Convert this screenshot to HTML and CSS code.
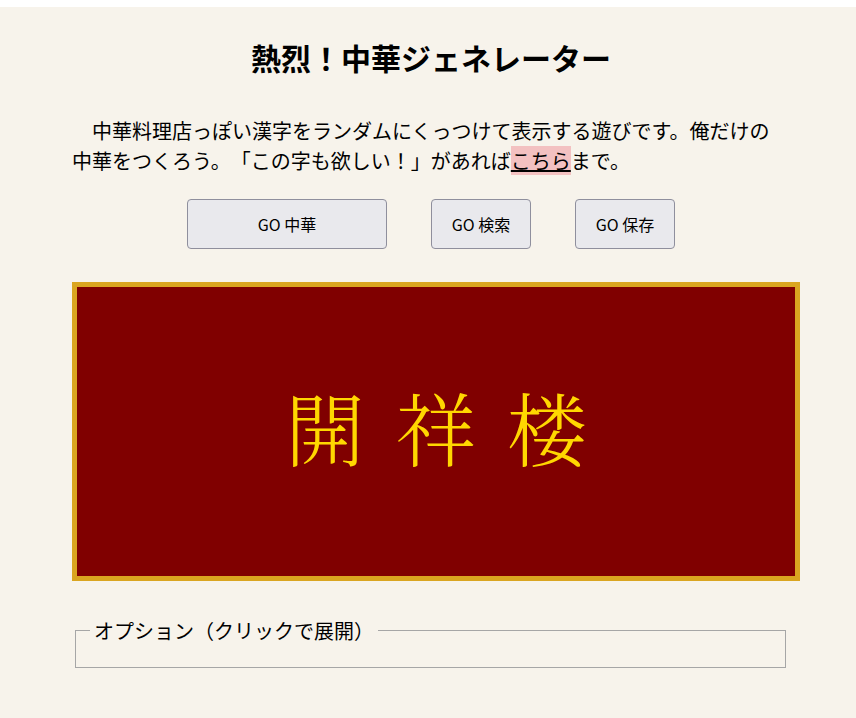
FILE: index.html
```html
<!DOCTYPE html>
<html lang="ja">
<head>
<meta charset="utf-8">
<title>熱烈！中華ジェネレーター</title>
<link rel="stylesheet" href="styles.css">
</head>
<body>
<div class="wrap">
  <h1 class="title">熱烈！中華ジェネレーター</h1>
  <p class="intro">中華料理店っぽい漢字をランダムにくっつけて表示する遊びです。俺だけの中華をつくろう。「この字も欲しい！」があれば<a class="link" href="#">こちら</a>まで。</p>
  <div class="buttons">
    <button class="btn btn-wide">GO 中華</button>
    <button class="btn">GO 検索</button>
    <button class="btn">GO 保存</button>
  </div>
  <div class="sign"><span class="sign-text">開祥楼</span></div>
  <fieldset class="options">
    <legend class="options-legend">オプション（クリックで展開）</legend>
  </fieldset>
</div>
</body>
</html>
```

FILE: styles.css
```css
html {
  background: #ffffff;
}
body {
  margin: 7px 0 0;
  min-height: 711px;
  background: #f7f3eb;
  font-family: "Noto Sans CJK JP", "Noto Sans", sans-serif;
  color: #000;
  text-spacing-trim: space-all;
}
.wrap {
  width: 718px;
  margin-left: 72px;
  display: flex;
  flex-direction: column;
}
.title {
  margin: 0;
  padding-top: 30px;
  font-size: 30px;
  line-height: 40px;
  font-weight: 700;
  text-align: center;
}
.intro {
  margin: 39px 8px 0 0;
  font-size: 20px;
  line-height: 30px;
  text-indent: 20px;
}
.link {
  color: #000;
  background: #f3c1c1;
  text-decoration: underline;
}
.buttons {
  margin-top: 23px;
  display: flex;
  justify-content: center;
  gap: 44px;
}
.btn {
  width: 100px;
  height: 50px;
  background: #e9e9ed;
  border: 1px solid #8f8f9d;
  border-radius: 4px;
  font-family: "Noto Sans CJK JP", "Noto Sans", sans-serif;
  font-size: 16px;
  color: #000;
  padding: 0;
}
.btn-wide {
  width: 200px;
}
.sign {
  margin-top: 33px;
  width: 100%;
  height: 289px;
  border: 5px solid #daa520;
  background: #800000;
  display: flex;
  align-items: center;
  justify-content: center;
}
.sign-text {
  color: #ffd700;
  font-family: "Noto Serif CJK JP", "Noto Sans CJK JP", serif;
  font-weight: 300;
  font-size: 80px;
  line-height: 1;
  letter-spacing: 31px;
  padding-left: 31px;
  margin-bottom: 12px;
}
.options {
  margin: 35px 4px 0 3px;
  padding: 0 14px 22px;
  border: 1px solid #a6a6a6;
}
.options-legend {
  padding: 0 4px;
  font-size: 20px;
  line-height: 29px;
}
```
